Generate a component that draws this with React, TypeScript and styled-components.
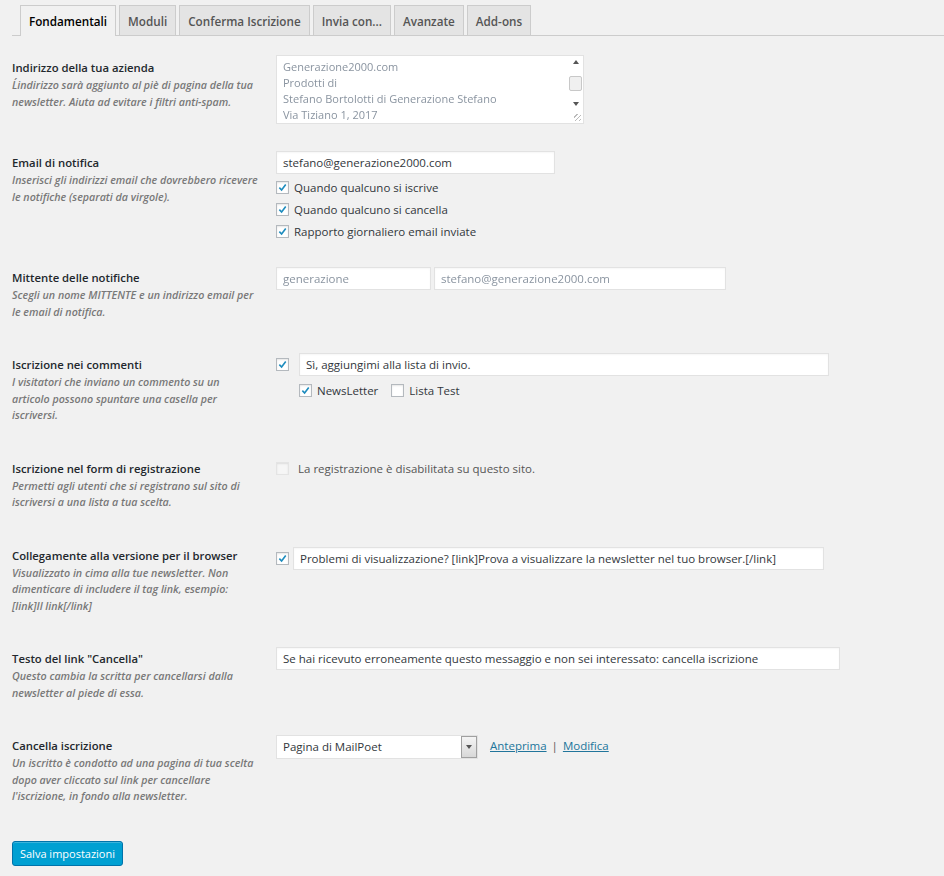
import React from "react";
import styled, { createGlobalStyle } from "styled-components";

const Global = createGlobalStyle`
  html, body { margin: 0; padding: 0; background: #f1f1f1; }
  body { font-family: "Open Sans", "Liberation Sans", sans-serif; color: #444; }
  * { box-sizing: border-box; }
`;

const Page = styled.div`
  width: 944px;
  min-height: 876px;
  background: #f1f1f1;
`;

const TabBar = styled.div`
  display: flex;
  gap: 3px;
  margin-left: 12px;
  padding: 5px 0 0 8px;
  border-bottom: 1px solid #ccc;
`;

const Tab = styled.div<{ $active?: boolean }>`
  padding: 0 8px;
  display: flex;
  align-items: center;
  font-size: 11.7px;
  font-weight: 600;
  color: ${(p) => (p.$active ? "#000" : "#555")};
  background: ${(p) => (p.$active ? "#f1f1f1" : "#e4e4e4")};
  border: 1px solid #ccc;
  border-bottom: none;
  margin-bottom: ${(p) => (p.$active ? "-1px" : "0")};
  height: ${(p) => (p.$active ? "31px" : "30px")};
`;

const Form = styled.div`
  padding: 8px 0 0 12px;
`;

const Row = styled.div`
  display: flex;
`;

const Th = styled.div`
  width: 264px;
  flex: none;
  padding: 15px 12px 21px 0;
`;

const Td = styled.div<{ $pt?: number }>`
  flex: 1;
  padding: ${(p) => p.$pt ?? 12}px 0 12px 0;
  display: flex;
  flex-direction: column;
  align-items: flex-start;
`;

const Title = styled.div`
  font-size: 11.3px;
  line-height: 18px;
  font-weight: 600;
  color: #23282d;
`;

const Desc = styled.div`
  font-size: 10.7px;
  line-height: 16.5px;
  font-style: italic;
  font-weight: 600;
  color: #787878;
  width: 246px;
`;

const Input = styled.div<{ $w: number }>`
  width: ${(p) => p.$w}px;
  height: 23px;
  background: #fff;
  border: 1px solid #e2e2e2;
  box-shadow: inset 0 1px 2px rgba(0, 0, 0, 0.04);
  font-size: 11.5px;
  line-height: 21px;
  padding: 0 6px;
  color: #32373c;
  white-space: nowrap;
  overflow: hidden;
`;

const Blurred = styled.span`
  color: #8a94a0;
  filter: blur(0.6px);
`;

const TextArea = styled.div`
  width: 308px;
  height: 69px;
  background: #fff;
  border: 1px solid #e2e2e2;
  margin-bottom: 3px;
  position: relative;
  display: flex;
`;

const TALines = styled.div`
  flex: 1;
  padding: 3px 6px;
  font-size: 11px;
  line-height: 16px;
  overflow: hidden;
  display: flex;
  flex-direction: column;
`;

const ScrollBar = styled.div`
  width: 15px;
  display: flex;
  flex-direction: column;
  align-items: center;
  padding-top: 4px;
  height: 50px;
  justify-content: space-between;
`;

const Thumb = styled.div`
  width: 13px;
  height: 15px;
  background: #f0f0f0;
  border: 1px solid #c8c8c8;
  border-radius: 2px;
`;

const Arrow = styled.div<{ $up?: boolean }>`
  width: 0;
  height: 0;
  border-left: 3px solid transparent;
  border-right: 3px solid transparent;
  ${(p) => (p.$up ? "border-bottom: 4px solid #555;" : "border-top: 4px solid #555;")}
`;

const Grip = styled.div`
  position: absolute;
  right: 2px;
  bottom: 2px;
  width: 7px;
  height: 7px;
  background: repeating-linear-gradient(135deg, transparent 0 2px, #bbb 2px 3px);
`;

const CheckLine = styled.label<{ $gap?: number }>`
  display: flex;
  align-items: center;
  height: 22px;
  font-size: 11.5px;
  color: #32373c;
  gap: ${(p) => p.$gap ?? 5}px;
`;

const Box = styled.span<{ $disabled?: boolean }>`
  width: 13px;
  height: 13px;
  flex: none;
  background: ${(p) => (p.$disabled ? "#f6f6f6" : "#fff")};
  border: 1px solid ${(p) => (p.$disabled ? "#e4e4e4" : "#b4b9be")};
  box-shadow: inset 0 1px 2px rgba(0, 0, 0, 0.1);
  display: flex;
  align-items: center;
  justify-content: center;
`;

const Inline = styled.div<{ $gap?: number; $pl?: number; $mt?: number }>`
  display: flex;
  align-items: center;
  gap: ${(p) => p.$gap ?? 6}px;
  padding-left: ${(p) => p.$pl ?? 0}px;
  margin-top: ${(p) => p.$mt ?? 0}px;
`;

const Select = styled.div`
  width: 202px;
  height: 24px;
  background: #fff;
  border: 1px solid #e2e2e2;
  display: flex;
  font-size: 11.5px;
  color: #32373c;
`;

const SelectText = styled.div`
  flex: 1;
  padding: 0 6px;
  line-height: 22px;
`;

const SelectBtn = styled.div`
  width: 16px;
  background: linear-gradient(#f4f4f4, #d8d8d8);
  border: 1px solid #a0a0a0;
  display: flex;
  align-items: center;
  justify-content: center;
`;

const Links = styled.div`
  margin-top: -4px;
  font-size: 11.5px;
`;

const Link = styled.a`
  color: #21759b;
  text-decoration: underline;
`;

const Sep = styled.span`
  color: #555;
  margin: 0 5px;
`;

const Muted = styled.span`
  color: #555;
  font-size: 11.5px;
`;

const Button = styled.button`
  margin: 15px 0 0 12px;
  height: 25px;
  width: 111px;
  padding: 0;
  background: #00a0d2;
  border: 1px solid #0073aa;
  border-radius: 3px;
  color: #fff;
  font-family: inherit;
  font-size: 11px;
  box-shadow: inset 0 1px 0 rgba(120, 200, 230, 0.5);
`;

const Spacer = styled.div<{ $h: number }>`
  height: ${(p) => p.$h}px;
`;

const Check = ({ on = true, disabled = false }: { on?: boolean; disabled?: boolean }) => (
  <Box $disabled={disabled}>
    {on && (
      <svg width="9" height="9" viewBox="0 0 10 10">
        <path d="M1.5 5.2 L4 7.8 L8.6 1.6" stroke="#1e8cbe" strokeWidth="1.8" fill="none" />
      </svg>
    )}
  </Box>
);

export default function App() {
  const tabs = ["Fondamentali", "Moduli", "Conferma Iscrizione", "Invia con...", "Avanzate", "Add-ons"];
  return (
    <Page>
      <Global />
      <TabBar>
        {tabs.map((t, i) => (
          <Tab key={t} $active={i === 0}>
            {t}
          </Tab>
        ))}
      </TabBar>
      <Form>
        <Row>
          <Th>
            <Title>Indirizzo della tua azienda</Title>
            <Desc>L´indirizzo sarà aggiunto al piè di pagina della tua newsletter. Aiuta ad evitare i filtri anti-spam.</Desc>
          </Th>
          <Td $pt={11}>
            <TextArea>
              <TALines>
                <Blurred>Generazione2000.com</Blurred>
                <Blurred>Prodotti di</Blurred>
                <Blurred>Stefano Bortolotti di Generazione Stefano</Blurred>
                <Blurred>Via Tiziano 1, 2017</Blurred>
              </TALines>
              <ScrollBar>
                <Arrow $up />
                <Thumb />
                <Arrow />
              </ScrollBar>
              <Grip />
            </TextArea>
          </Td>
        </Row>

        <Row>
          <Th>
            <Title>Email di notifica</Title>
            <Desc>Inserisci gli indirizzi email che dovrebbero ricevere le notifiche (separati da virgole).</Desc>
          </Th>
          <Td>
            <Input $w={279}>stefano@generazione2000.com</Input>
            <Spacer $h={2} />
            <CheckLine><Check />Quando qualcuno si iscrive</CheckLine>
            <CheckLine><Check />Quando qualcuno si cancella</CheckLine>
            <CheckLine><Check />Rapporto giornaliero email inviate</CheckLine>
          </Td>
        </Row>

        <Row>
          <Th>
            <Title>Mittente delle notifiche</Title>
            <Desc>Scegli un nome MITTENTE e un indirizzo email per le email di notifica.</Desc>
          </Th>
          <Td $pt={13}>
            <Inline $gap={3}>
              <Input $w={155}><Blurred>generazione</Blurred></Input>
              <Input $w={292}><Blurred>stefano@generazione2000.com</Blurred></Input>
            </Inline>
          </Td>
        </Row>

        <Row>
          <Th>
            <Title>Iscrizione nei commenti</Title>
            <Desc>I visitatori che inviano un commento su un articolo possono spuntare una casella per iscriversi.</Desc>
          </Th>
          <Td>
            <Inline $gap={10}>
              <Check />
              <Input $w={530}>Sì, aggiungimi alla lista di invio.</Input>
            </Inline>
            <Inline $pl={23} $gap={13} $mt={3}>
              <CheckLine><Check />NewsLetter</CheckLine>
              <CheckLine><Check on={false} />Lista Test</CheckLine>
            </Inline>
          </Td>
        </Row>

        <Row>
          <Th>
            <Title>Iscrizione nel form di registrazione</Title>
            <Desc>Permetti agli utenti che si registrano sul sito di iscriversi a una lista a tua scelta.</Desc>
          </Th>
          <Td $pt={13}>
            <CheckLine $gap={9}>
              <Check on={false} disabled />
              <Muted>La registrazione è disabilitata su questo sito.</Muted>
            </CheckLine>
          </Td>
        </Row>

        <Row>
          <Th>
            <Title>Collegamente alla versione per il browser</Title>
            <Desc>Visualizzato in cima alla tue newsletter. Non dimenticare di includere il tag link, esempio: [link]Il link[/link]</Desc>
          </Th>
          <Td $pt={15}>
            <Inline $gap={4}>
              <Check />
              <Input $w={531}>Problemi di visualizzazione? [link]Prova a visualizzare la newsletter nel tuo browser.[/link]</Input>
            </Inline>
          </Td>
        </Row>

        <Row>
          <Th>
            <Title>Testo del link "Cancella"</Title>
            <Desc>Questo cambia la scritta per cancellarsi dalla newsletter al piede di essa.</Desc>
          </Th>
          <Td>
            <Input $w={564}>Se hai ricevuto erroneamente questo messaggio e non sei interessato: cancella iscrizione</Input>
          </Td>
        </Row>

        <Row>
          <Th>
            <Title>Cancella iscrizione</Title>
            <Desc>Un iscritto è condotto ad una pagina di tua scelta dopo aver cliccato sul link per cancellare l'iscrizione, in fondo alla newsletter.</Desc>
          </Th>
          <Td $pt={13}>
            <Inline $gap={12}>
              <Select>
                <SelectText>Pagina di MailPoet</SelectText>
                <SelectBtn>
                  <Arrow />
                </SelectBtn>
              </Select>
              <Links>
                <Link>Anteprima</Link>
                <Sep>|</Sep>
                <Link>Modifica</Link>
              </Links>
            </Inline>
          </Td>
        </Row>
      </Form>
      <Button>Salva impostazioni</Button>
    </Page>
  );
}
